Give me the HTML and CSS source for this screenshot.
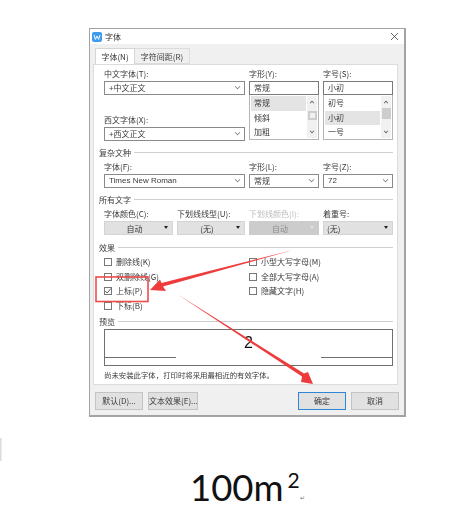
FILE: index.html
```html
<!DOCTYPE html>
<html>

<head>
    <title>字体</title>
    <link rel="stylesheet" href="styles.css">
</head>

<body>
    <div class="dialog">
        <div class="titlebar">
            <svg class="app-icon" width="10" height="10" viewBox="0 0 10 10">
                <rect width="10" height="10" rx="2" fill="#3d9bf0" />
                <path d="M2 3l1.400 4.400L5 4l1.600 3.400L8 3" fill="none" stroke="#fff" stroke-width="1" />
            </svg>
            <span class="title">字体</span>
            <svg class="close" width="7" height="7" viewBox="0 0 7 7">
                <path d="M0 0l7 7M7 0L0 7" stroke="#555" stroke-width="0.9" />
            </svg>
        </div>
        <div class="tabs">
            <div class="tab active">字体(N)</div>
            <div class="tab">字符间距(R)</div>
        </div>
        <div class="panel">
            <div class="fields top-fields">
                <div class="col">
                    <div class="label">中文字体(T):</div>
                    <div class="select"><span>+中文正文</span><i class="chev"></i></div>
                    <div class="label second">西文字体(X):</div>
                    <div class="select"><span>+西文正文</span><i class="chev"></i></div>
                </div>
                <div class="col">
                    <div class="label">字形(Y):</div>
                    <div class="input">常规</div>
                    <div class="list">
                        <ul>
                            <li class="picked">常规</li>
                            <li>倾斜</li>
                            <li>加粗</li>
                        </ul>
                        <div class="scroll">
                            <i class="up"></i>
                            <b class="thumb light"></b>
                            <i class="down"></i>
                        </div>
                    </div>
                </div>
                <div class="col">
                    <div class="label">字号(S):</div>
                    <div class="input">小初</div>
                    <div class="list">
                        <ul>
                            <li>初号</li>
                            <li class="picked">小初</li>
                            <li>一号</li>
                        </ul>
                        <div class="scroll">
                            <i class="up"></i>
                            <b class="thumb"></b>
                            <i class="down"></i>
                        </div>
                    </div>
                </div>
            </div>

            <div class="legend"><span>复杂文种</span></div>
            <div class="fields">
                <div class="col">
                    <div class="label">字体(F):</div>
                    <div class="select latin"><span>Times New Roman</span><i class="chev"></i></div>
                </div>
                <div class="col">
                    <div class="label">字形(L):</div>
                    <div class="select"><span>常规</span><i class="chev"></i></div>
                </div>
                <div class="col">
                    <div class="label">字号(Z):</div>
                    <div class="select latin"><span>72</span><i class="chev"></i></div>
                </div>
            </div>

            <div class="legend"><span>所有文字</span></div>
            <div class="fields four">
                <div class="col">
                    <div class="label">字体颜色(C):</div>
                    <div class="combo"><span>自动</span><i class="caret"></i></div>
                </div>
                <div class="col">
                    <div class="label">下划线线型(U):</div>
                    <div class="combo"><span>(无)</span><i class="caret"></i></div>
                </div>
                <div class="col">
                    <div class="label off">下划线颜色(I):</div>
                    <div class="combo off"><span>自动</span><i class="caret"></i></div>
                </div>
                <div class="col">
                    <div class="label">着重号:</div>
                    <div class="combo left"><span>(无)</span><i class="caret"></i></div>
                </div>
            </div>

            <div class="legend effects-legend"><span>效果</span></div>
            <div class="effects">
                <div class="check-col">
                    <div class="check"><i class="box"></i>删除线(K)</div>
                    <div class="check"><i class="box"></i>双删除线(G)</div>
                    <div class="check"><i class="box">
                            <svg width="8" height="8" viewBox="0 0 8 8">
                                <path d="M1.200 4l2 2L7 1.500" fill="none" stroke="#444" stroke-width="0.9" />
                            </svg>
                        </i>上标(P)</div>
                    <div class="check"><i class="box"></i>下标(B)</div>
                </div>
                <div class="check-col">
                    <div class="check"><i class="box"></i>小型大写字母(M)</div>
                    <div class="check"><i class="box"></i>全部大写字母(A)</div>
                    <div class="check"><i class="box"></i>隐藏文字(H)</div>
                </div>
            </div>

            <div class="legend preview-legend"><span>预览</span></div>
            <div class="preview">
                <div class="sample">2</div>
                <div class="rules"><i></i><i></i></div>
            </div>
            <div class="note">尚未安装此字体，打印时将采用最相近的有效字体。</div>
        </div>
        <div class="buttons">
            <div class="btn">默认(D)...</div>
            <div class="btn wide">文本效果(E)...</div>
            <div class="spacer"></div>
            <div class="btn primary">确定</div>
            <div class="btn">取消</div>
        </div>
    </div>

    <div class="result">
        <span class="big">100m</span><span class="sup">2</span><span class="mark">↵</span>
    </div>

    <svg class="marks" width="462" height="514" viewBox="0 0 462 514">
        <rect x="0" y="438" width="1.500" height="23" fill="#dcdcdc" />
        <rect x="96" y="277" width="52" height="24.500" fill="none" stroke="#ee4b4b" stroke-width="1.600" />
        <polygon points="293,250 163,286.500 166,291 150,290 160,279.500 161.500,283" fill="#ee3b3b" />
        <polygon points="177,294 304,373.500 308,372 313,384 301,382 302,376.500" fill="#ee3b3b" />
    </svg>
</body>

</html>
```

FILE: styles.css
```css
* {
    box-sizing: border-box;
}

html,
body {
    margin: 0;
    padding: 0;
    background: #fff;
}

body {
    position: relative;
    width: 462px;
    height: 514px;
    overflow: hidden;
    font-family: "Noto Sans CJK SC", "Liberation Sans", sans-serif;
    font-size: 8px;
    color: #3a3a3a;
}

ul {
    list-style: none;
    margin: 0;
    padding: 0;
}

i {
    display: block;
    font-style: normal;
}

.dialog {
    width: 317px;
    height: 389px;
    margin: 28px 0 0 89px;
    border: 1px solid #a3a3a3;
    border-right-width: 2px;
    border-bottom-width: 2px;
    background: #f0f0f0;
    filter: blur(0.25px);
}

.titlebar {
    display: flex;
    align-items: center;
    height: 15px;
    padding: 0 6px 0 2px;
    background: #fff;
}

.title {
    margin-left: 3px;
    color: #333;
}

.close {
    margin-left: auto;
}

.tabs {
    display: flex;
    height: 20px;
    padding: 4px 0 0 5px;
}

.tab {
    width: 55px;
    height: 16px;
    border: 1px solid #dcdcdc;
    border-left: 0;
    line-height: 15px;
    text-align: center;
}

.tab.active {
    width: 40px;
    border: 1px solid #d5d5d5;
    border-bottom: 0;
    background: #fff;
    line-height: 16px;
}

.panel {
    width: 305px;
    height: 321px;
    margin-left: 3px;
    padding: 2px 4px 0 5px;
    border: 1px solid #dcdcdc;
    background: #fff;
}

.fields {
    display: grid;
    grid-template-columns: 141px 70px 70px;
    column-gap: 4px;
    margin-left: 5px;
}

.fields.four {
    grid-template-columns: 69px 68px 70px 70px;
    column-gap: 4px;
}

.top-fields {
    height: 74px;
}

.label {
    height: 14px;
    line-height: 13px;
    white-space: nowrap;
}

.label.second {
    margin-top: 18px;
}

.label.off {
    color: #bdbdbd;
}

.select,
.input {
    display: flex;
    align-items: center;
    justify-content: space-between;
    height: 14px;
    padding: 0 3px 0 4px;
    border: 1px solid #8a8a8a;
    background: #fff;
    line-height: 12px;
}

.input {
    border-color: #7a7a7a;
}

.latin {
    font-family: "Liberation Sans", sans-serif;
}

.chev {
    width: 5px;
    height: 5px;
    margin: -3px 1px 0 0;
    border-right: 1px solid #777;
    border-bottom: 1px solid #777;
    transform: rotate(45deg) scale(0.8);
}

.list {
    display: flex;
    height: 45px;
    padding: 1px;
    border: 1px solid #b5b5b5;
    border-top: 0;
    background: #fff;
}

.list ul {
    flex: 1;
}

.list li {
    height: 14.500px;
    padding-left: 3px;
    line-height: 14px;
}

.list li.picked {
    background: #e4e4e4;
}

.scroll {
    display: flex;
    flex-direction: column;
    align-items: center;
    width: 10px;
    margin-left: 1px;
    background: #f1f1f1;
}

.scroll .up,
.scroll .down {
    width: 4px;
    height: 4px;
    border: 1px solid #555;
    border-right: 0;
    border-bottom: 0;
    transform: rotate(45deg) scale(0.8);
    margin-top: 5px;
}

.scroll .down {
    transform: rotate(225deg) scale(0.8);
    margin-top: auto;
    margin-bottom: 5px;
}

.thumb {
    display: block;
    width: 9px;
    height: 11px;
    margin-top: 3px;
    background: #cdcdcd;
}

.thumb.light {
    height: 9px;
    margin-top: 6px;
    border: 2px solid #cdcdcd;
    background: #f1f1f1;
}

.legend {
    display: flex;
    align-items: center;
    height: 14px;
    margin: 4px 0 1px;
}

.legend::after {
    content: "";
    flex: 1;
    height: 1px;
    margin-left: 3px;
    background: #cfcfcf;
}

.combo {
    position: relative;
    display: flex;
    align-items: center;
    justify-content: center;
    height: 14px;
    padding-right: 8px;
    background: #e1e1e1;
    border: 1px solid #d4d4d4;
}

.combo.left {
    justify-content: flex-start;
    padding-left: 3px;
}

.combo.off {
    background: #cccccc;
    border-color: #cccccc;
    color: #8d8d8d;
}

.caret {
    position: absolute;
    right: 4px;
    top: 4px;
    width: 0;
    height: 0;
    border-style: solid;
    border-width: 3px 2.500px 0;
    border-color: #222 transparent transparent;
}

.combo.off .caret {
    border-top-color: #e2e2e2;
}

.effects-legend {
    margin-top: 5px;
}

.effects {
    display: grid;
    grid-template-columns: 145px 1fr;
    height: 58px;
    margin: 1px 0 0 5px;
}

.check {
    display: flex;
    align-items: center;
    height: 14.600px;
    line-height: 14px;
    white-space: nowrap;
}

.box {
    flex: none;
    width: 8px;
    height: 8px;
    margin-right: 4px;
    border: 1px solid #777;
    background: #fff;
}

.box svg {
    display: block;
    margin: -1px;
}

.preview-legend {
    margin-top: 1px;
}

.preview {
    display: flex;
    flex-direction: column;
    height: 37px;
    margin-left: 5px;
    border: 1px solid #707070;
    background: #fff;
}

.sample {
    height: 27px;
    padding-top: 3px;
    font-family: "Liberation Sans", sans-serif;
    font-size: 16px;
    line-height: 20px;
    color: #111;
    text-align: center;
}

.rules {
    display: flex;
    justify-content: space-between;
}

.rules i {
    width: 71px;
    height: 1px;
    background: #707070;
}

.note {
    margin: 2px 0 0 5px;
    height: 14px;
    font-size: 7.400px;
    line-height: 14px;
    white-space: nowrap;
}

.buttons {
    display: flex;
    gap: 5px;
    margin: 7px 0 0 5px;
    width: 304px;
}

.btn {
    width: 48px;
    height: 18px;
    border: 1px solid #c4c4c4;
    background: #e1e1e1;
    line-height: 16px;
    text-align: center;
    white-space: nowrap;
}

.btn.wide {
    width: 50px;
}

.btn.primary {
    border-color: #2f86d6;
}

.spacer {
    flex: 1;
}

.result {
    display: flex;
    align-items: flex-start;
    height: 60px;
    margin: 47px 0 0 190px;
    font-family: "Lato", "Liberation Sans", sans-serif;
    color: #111;
}

.big {
    font-size: 36.500px;
    line-height: 46px;
}

.sup {
    margin: 2px 0 0 4px;
    font-size: 21px;
    line-height: 28px;
}

.mark {
    margin: 30px 0 0 0;
    font-size: 6px;
    line-height: 8px;
    color: #777;
}

.marks {
    position: absolute;
    left: 0;
    top: 0;
    pointer-events: none;
}
```
